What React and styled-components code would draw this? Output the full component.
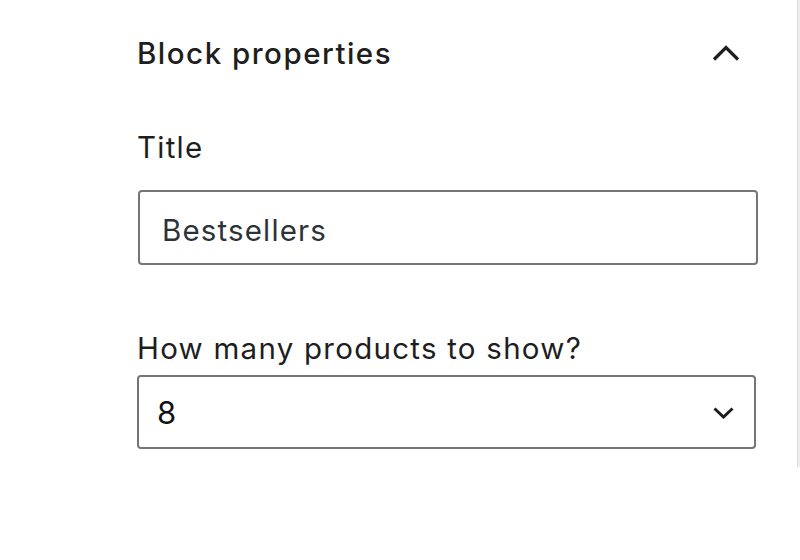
import styled, { createGlobalStyle } from "styled-components";

const GlobalStyle = createGlobalStyle`
  html, body {
    margin: 0;
    padding: 0;
    background: #fff;
  }
  body {
    font-family: Inter, "Noto Sans", "Liberation Sans", sans-serif;
    color: #1e1e1e;
  }
`;

const Page = styled.div`
  display: flex;
  width: 800px;
  height: 560px;
  background: #fff;
  overflow: hidden;
`;

const Panel = styled.div`
  flex: 1;
  padding: 36px 39px 0 137px;
`;

const Scrollbar = styled.div`
  width: 4px;
  height: 467px;
  background: #efefef;
  border-left: 1px solid #dcdcdc;
  box-sizing: border-box;
`;

const Header = styled.div`
  display: flex;
  align-items: center;
  justify-content: space-between;
  height: 34px;
`;

const Heading = styled.h2`
  margin: 0;
  font-size: 29.5px;
  line-height: 34px;
  font-weight: 500;
  letter-spacing: 1.5px;
  color: #1e1e1e;
`;

const Toggle = styled.button`
  display: flex;
  align-items: center;
  background: none;
  border: 0;
  padding: 0;
  margin-right: 18px;
  color: #1e1e1e;
  cursor: pointer;
`;

const Field = styled.div`
  display: flex;
  flex-direction: column;
  margin-top: ${(p) => p.$top}px;
`;

const Label = styled.label`
  font-size: 29.5px;
  line-height: 34px;
  font-weight: 400;
  letter-spacing: 1.25px;
  color: #1e1e1e;
  margin-bottom: ${(p) => p.$gap}px;
`;

const TextInput = styled.input`
  box-sizing: border-box;
  width: 620px;
  height: 75px;
  margin-left: 1px;
  padding: 5px 22px 0;
  border: 2px solid #757575;
  border-radius: 4px;
  font-family: inherit;
  font-size: 29.5px;
  letter-spacing: 1.15px;
  color: #2c3338;
  background: #fff;
  outline: none;
`;

const SelectWrap = styled.div`
  position: relative;
  width: 619px;
`;

const Select = styled.select`
  box-sizing: border-box;
  width: 100%;
  height: 74px;
  padding: 0 60px 0 18px;
  border: 2px solid #757575;
  border-radius: 4px;
  font-family: inherit;
  font-size: 31px;
  color: #111;
  background: #fff;
  appearance: none;
  outline: none;
`;

const Chevron = styled.svg`
  position: absolute;
  right: 22px;
  top: 32px;
  pointer-events: none;
`;

export default function App() {
  return (
    <>
      <GlobalStyle />
      <Page>
        <Panel>
          <Header>
            <Heading>Block properties</Heading>
            <Toggle aria-label="Collapse">
              <svg width="28" height="16" viewBox="0 0 28 16">
                <path
                  d="M2 14.5 L14 2.5 L26 14.5"
                  fill="none"
                  stroke="#1e1e1e"
                  strokeWidth="3.2"
                />
              </svg>
            </Toggle>
          </Header>

          <Field $top={60}>
            <Label $gap={26}>Title</Label>
            <TextInput defaultValue="Bestsellers" />
          </Field>

          <Field $top={66}>
            <Label $gap={10}>How many products to show?</Label>
            <SelectWrap>
              <Select defaultValue="8">
                <option value="4">4</option>
                <option value="8">8</option>
                <option value="12">12</option>
              </Select>
              <Chevron width="21" height="12" viewBox="0 0 21 12">
                <path
                  d="M1.5 1.5 L10.5 10 L19.5 1.5"
                  fill="none"
                  stroke="#1e1e1e"
                  strokeWidth="3"
                />
              </Chevron>
            </SelectWrap>
          </Field>
        </Panel>
        <Scrollbar />
      </Page>
    </>
  );
}
